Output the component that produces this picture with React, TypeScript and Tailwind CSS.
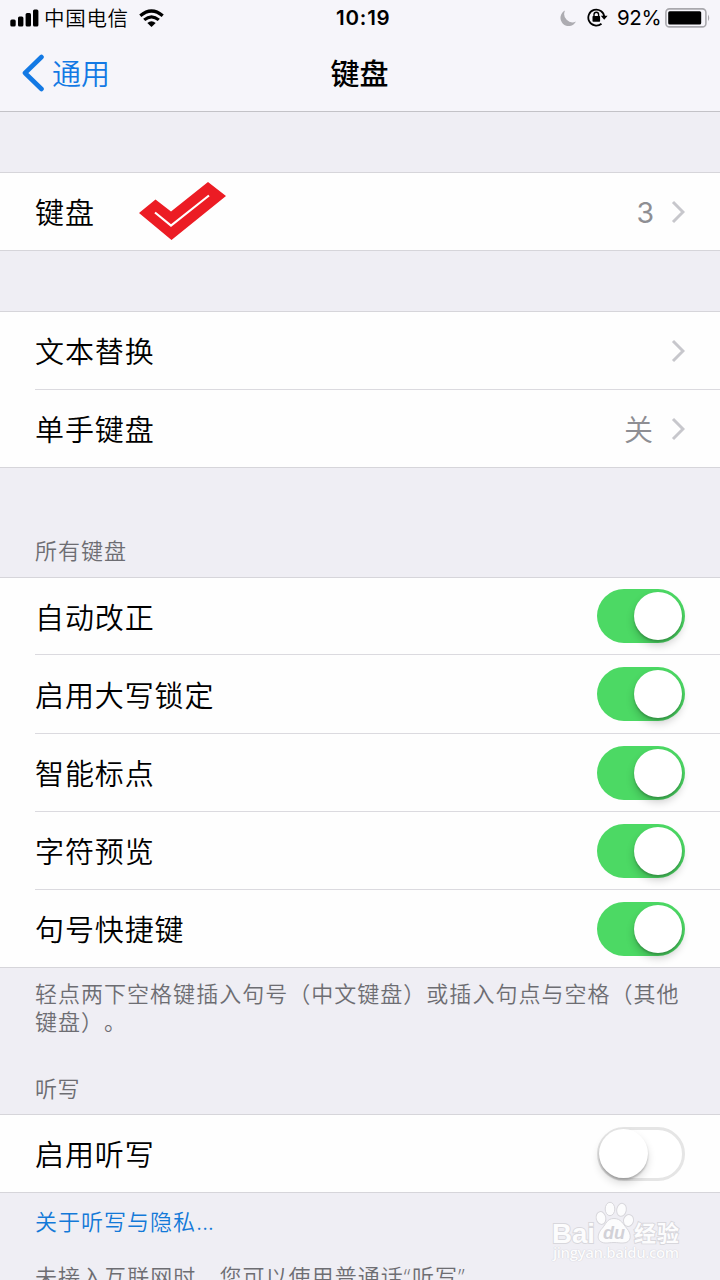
import type { ReactNode } from "react";

function Chevron() {
  return (
    <svg className="ml-[18px] h-[24px] w-[14px] shrink-0" viewBox="0 0 14 24" fill="none">
      <path d="M2 2 L12 12 L2 22" stroke="#c7c7cc" strokeWidth="3" />
    </svg>
  );
}

function Toggle({ on }: { on: boolean }) {
  return on ? (
    <span className="flex h-[54px] w-[88px] shrink-0 items-center justify-end rounded-full bg-[#4cd964] pr-[3px]">
      <span className="h-[48px] w-[48px] rounded-full bg-white shadow-[0_5px_8px_rgba(0,0,0,0.2),0_2px_2px_rgba(0,0,0,0.18)]" />
    </span>
  ) : (
    <span className="flex h-[54px] w-[88px] shrink-0 items-center rounded-full border-[3px] border-[#e5e5e5] bg-white">
      <span className="-ml-px h-[49px] w-[49px] shrink-0 rounded-full bg-white shadow-[0_5px_9px_rgba(0,0,0,0.14),0_2px_2px_rgba(0,0,0,0.22)]" />
    </span>
  );
}

function Row({ label, children, last, height = "h-[78px]", mark }: { label: string; children: ReactNode; last?: boolean; height?: string; mark?: ReactNode }) {
  return (
    <div className={`flex bg-[#fefefe] pl-[35px] ${height} ${last ? "border-b border-[#d6d5da]" : ""}`}>
      <div className={`flex flex-1 items-center pr-[35px] ${last ? "" : "border-b border-[#dbdadf]"}`}>
        <span className="pb-px text-[29px] font-[350] leading-[40px] tracking-[0.9px] text-black">{label}</span>
        {mark}
        <span className="flex-1" />
        {children}
      </div>
    </div>
  );
}

function Group({ children }: { children: ReactNode }) {
  return <section className="border-t border-[#d6d5da]">{children}</section>;
}

function Check() {
  return (
    <svg className="-mt-[2px] ml-[44px] h-[58px] w-[87px]" viewBox="0 0 87 58">
      <path d="M0 31 L16.500 17.500 L32 29.500 L69 0 L87 14 L32.500 58 Z" fill="#ec1c24" />
      <path d="M16 30.500 L32 43.500 L70 13.500" fill="none" stroke="#fff" strokeWidth="2.200" />
    </svg>
  );
}

function StatusBar() {
  return (
    <div className="flex h-[36px] items-center text-black">
      <svg className="ml-[10px] h-[18px] w-[29px]" viewBox="0 0 29 18">
        <rect x="0.300" y="10.500" width="5.400" height="7" rx="1.500" />
        <rect x="8" y="7.500" width="5.400" height="10" rx="1.500" />
        <rect x="15.600" y="4" width="5.400" height="13.500" rx="1.500" />
        <rect x="23" y="0.500" width="5.400" height="17" rx="1.500" />
      </svg>
      <span className="ml-[5px] w-[95px] pb-[2px] text-[20.5px] font-[350] leading-[28px] tracking-[0.7px]">中国电信</span>
      <svg className="h-[18px] w-[25px]" viewBox="0 0 25 18" fill="none" stroke="#000" strokeWidth="3.200">
        <path d="M1.300 6.800 Q12.500 -2.800 23.700 6.800" />
        <path d="M5.200 10.900 Q12.500 4.700 19.800 10.900" />
        <path d="M8.300 14 Q12.500 10.700 16.700 14 L12.500 18 Z" fill="#000" stroke="none" />
      </svg>
      <span className="ml-[172px] w-[224px] font-[Inter] text-[20.5px] font-semibold leading-[28px] tracking-[0.8px]">10:19</span>
      <svg className="h-[17px] w-[17px]" viewBox="0 0 17 17">
        <path d="M5 0.500 A8.200 8.200 0 1 0 16 11.500 A8.300 8.300 0 0 1 5 0.500 Z" fill="#adacb1" />
      </svg>
      <svg className="ml-[10px] h-[20px] w-[21px]" viewBox="0 0 21 20" fill="none">
        <path d="M14.500 15.700 A8 8 0 1 1 17.300 9" stroke="#000" strokeWidth="1.800" />
        <path d="M13.800 7.700 H20.600 L17.200 11.700 Z" fill="#000" />
        <rect x="5.500" y="8" width="7.600" height="5.800" rx="0.700" fill="#000" />
        <path d="M7 8.500 V6.500 A2.300 2.300 0 0 1 11.600 6.500 V8.500" stroke="#000" strokeWidth="1.400" />
      </svg>
      <span className="ml-[9px] w-[48px] font-[Inter] text-[20.5px] leading-[28px] tracking-[-0.4px]">92%</span>
      <svg className="-mt-px h-[20px] w-[46px]" viewBox="0 0 46 20">
        <rect x="0.900" y="0.900" width="40" height="18" rx="3.500" fill="none" stroke="#a9a8ad" strokeWidth="1.600" />
        <rect x="3.200" y="3.200" width="33" height="13.400" rx="1.500" />
        <path d="M43 6.500 Q45.500 9.900 43 13.300 Z" fill="#a9a8ad" />
      </svg>
    </div>
  );
}

function BaiduMark() {
  return (
    <svg className="absolute left-[550px] top-[1200px] h-[66px] w-[134px]" viewBox="0 0 134 66" fill="#fcfcfd" stroke="#d8d7dc" strokeWidth="1">
      <ellipse cx="51" cy="18" rx="4.800" ry="6.500" transform="rotate(-12 51 18)" />
      <ellipse cx="60" cy="9" rx="4.800" ry="6.700" />
      <ellipse cx="71.500" cy="9.800" rx="4.800" ry="6.500" transform="rotate(12 71.500 9.800)" />
      <ellipse cx="78.500" cy="20.500" rx="5" ry="6" transform="rotate(15 78.500 20.500)" />
      <path d="M64 18.500 C71 18.500 73 24 76.500 28 C82 34 82 43 73 43 C70 43.200 68 42.500 64 42.500 C60 42.500 58 43.200 55 43 C46 42 47 34 52 28.500 C56 24 57 18.500 64 18.500 Z" />
      <g strokeWidth="1.800" paintOrder="stroke">
        <text x="2" y="42.500" textLength="43" lengthAdjust="spacingAndGlyphs" className="font-['Liberation_Sans'] text-[28px] font-bold">Bai</text>
        <text x="84" y="41" textLength="45" className="font-['Noto_Sans_CJK_SC'] text-[22px] font-bold">经验</text>
      </g>
      <g stroke="none" className="font-['Open_Sans'] text-[15px] font-semibold [text-shadow:0_0_1px_#cfced5,0_0_1px_#d4d3d9]">
        <text x="3" y="58" textLength="126" lengthAdjust="spacing">jingyan.baidu.com</text>
      </g>
      <text x="53" y="39" textLength="22" stroke="none" fill="#d2d1d7" className="font-['Liberation_Sans'] text-[18px] font-bold italic">du</text>
    </svg>
  );
}

export default function App() {
  return (
    <main className="relative h-[1280px] w-[720px] overflow-hidden bg-[#efeef4] font-['Noto_Sans_CJK_SC',sans-serif] [text-spacing-trim:space-all]">
      <header className="h-[112px] border-b border-[#c3c2c7] bg-[#f6f5fa]">
        <StatusBar />
        <div className="grid h-[72px] grid-cols-3 items-center">
          <div className="flex items-center pl-[21px] text-[#1379e4]">
            <svg className="mt-[2px] h-[38px] w-[24px]" viewBox="0 0 24 38" fill="none">
              <path d="M20.500 3 L4 19 L20.500 35" stroke="currentColor" strokeWidth="4.600" strokeLinecap="round" strokeLinejoin="round" />
            </svg>
            <span className="ml-[7px] text-[29px] font-[350] leading-[40px]">通用</span>
          </div>
          <h1 className="-ml-px pb-px text-center text-[29px] font-medium leading-[40px]">键盘</h1>
        </div>
      </header>

      <div className="mt-[60px]">
        <Group>
          <Row label="键盘" last mark={<Check />}>
            <span className="-mr-px pt-[2px] font-[Inter] text-[28.5px] leading-[40px] text-[#8e8e93]">3</span>
            <Chevron />
          </Row>
        </Group>
      </div>

      <div className="mt-[60px]">
        <Group>
          <Row label="文本替换"><Chevron /></Row>
          <Row label="单手键盘" last>
            <span className="pb-px text-[29px] font-[350] leading-[40px] text-[#8e8e93]">关</span>
            <Chevron />
          </Row>
        </Group>
      </div>

      <h2 className="flex h-[109px] items-end pb-[12px] pl-[35px] text-[22px] font-[350] leading-[32px] tracking-[1px] text-[#6d6d72]">所有键盘</h2>
      <Group>
        <Row label="自动改正" height="h-[77px]"><Toggle on /></Row>
        <Row label="启用大写锁定" height="h-[79px]"><Toggle on /></Row>
        <Row label="智能标点"><Toggle on /></Row>
        <Row label="字符预览"><Toggle on /></Row>
        <Row label="句号快捷键" last><Toggle on /></Row>
      </Group>
      <p className="h-[95px] whitespace-nowrap pl-[35px] pt-[10px] text-[22px] font-[350] leading-[28px] tracking-[1.02px] text-[#6d6d72]">
        轻点两下空格键插入句号（中文键盘）或插入句点与空格（其他
        <br />
        键盘）。
      </p>
      <h2 className="flex h-[51px] items-end pb-[11px] pl-[35px] text-[22px] font-[350] leading-[32px] tracking-[0.5px] text-[#6d6d72]">听写</h2>
      <Group>
        <Row label="启用听写" last><Toggle on={false} /></Row>
      </Group>
      <p className="h-[66px] pl-[35px] pt-[11px] text-[22px] font-[350] leading-[32px] tracking-[1px] text-[#1379d8]">
        关于听写与隐私<span className="font-[Inter] tracking-[-0.3px]">...</span>
      </p>
      <p className="whitespace-nowrap pl-[35px] text-[22px] font-[350] leading-[32px] tracking-[1.05px] text-[#6d6d72]">
        未接入互联网时，您可以使用普通话<span className="font-['Open_Sans'] tracking-[1.5px]">“</span>听写<span className="font-['Open_Sans']">”</span>
      </p>
      <BaiduMark />
    </main>
  );
}
